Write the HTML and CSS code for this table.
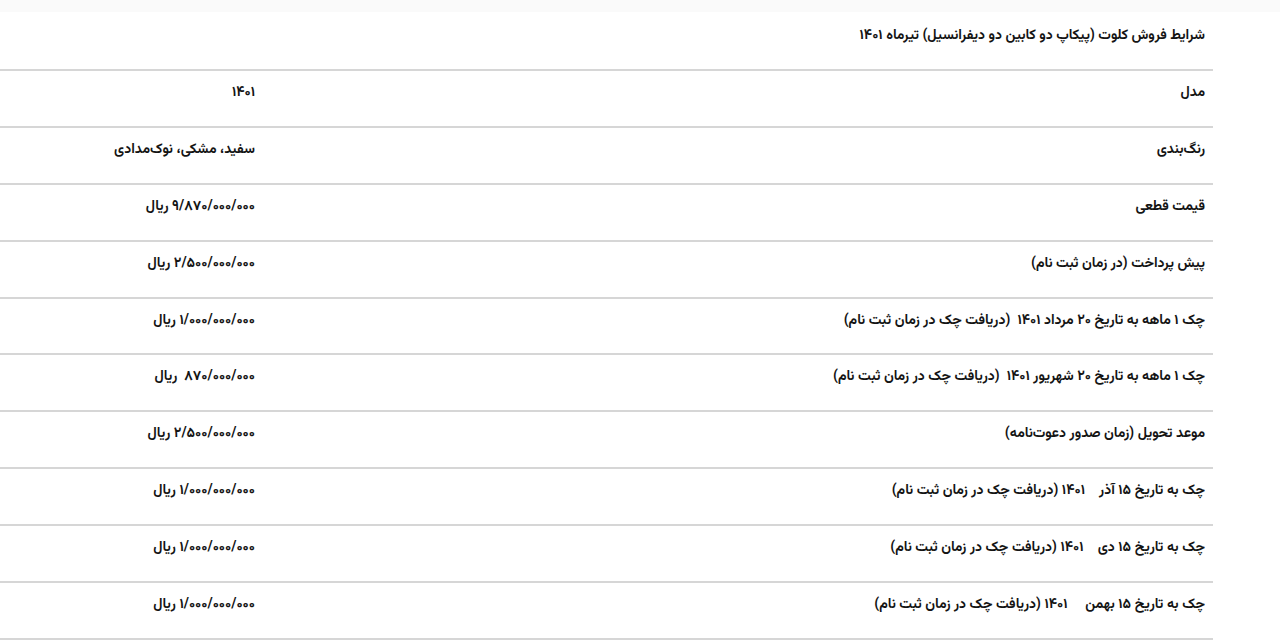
FILE: index.html
```html
<!DOCTYPE html>
<html lang="fa" dir="rtl">
<head>
<meta charset="utf-8">
<title>شرایط فروش کلوت</title>
<link rel="stylesheet" href="styles.css">
</head>
<body>
<div class="topband"></div>
<div class="sheet">
  <h2 class="title">شرایط فروش کلوت (پیکاپ دو کابین دو دیفرانسیل) تیرماه ۱۴۰۱</h2>
  <table class="terms">
    <tbody>
      <tr><td class="label">مدل</td><td class="value">۱۴۰۱</td></tr>
      <tr><td class="label">رنگ‌بندی</td><td class="value">سفید، مشکی، نوک‌مدادی</td></tr>
      <tr><td class="label">قیمت قطعی</td><td class="value">۹/۸۷۰/۰۰۰/۰۰۰ ریال</td></tr>
      <tr><td class="label">پیش پرداخت (در زمان ثبت نام)</td><td class="value">۲/۵۰۰/۰۰۰/۰۰۰ ریال</td></tr>
      <tr><td class="label">چک ۱ ماهه به تاریخ ۲۰ مرداد ۱۴۰۱  (دریافت چک در زمان ثبت نام)</td><td class="value">۱/۰۰۰/۰۰۰/۰۰۰ ریال</td></tr>
      <tr><td class="label">چک ۱ ماهه به تاریخ ۲۰ شهریور ۱۴۰۱  (دریافت چک در زمان ثبت نام)</td><td class="value">۸۷۰/۰۰۰/۰۰۰  ریال</td></tr>
      <tr><td class="label">موعد تحویل (زمان صدور دعوت‌نامه)</td><td class="value">۲/۵۰۰/۰۰۰/۰۰۰ ریال</td></tr>
      <tr><td class="label">چک به تاریخ ۱۵ آذر    ۱۴۰۱ (دریافت چک در زمان ثبت نام)</td><td class="value">۱/۰۰۰/۰۰۰/۰۰۰ ریال</td></tr>
      <tr><td class="label">چک به تاریخ ۱۵ دی    ۱۴۰۱ (دریافت چک در زمان ثبت نام)</td><td class="value">۱/۰۰۰/۰۰۰/۰۰۰ ریال</td></tr>
      <tr><td class="label">چک به تاریخ ۱۵ بهمن     ۱۴۰۱ (دریافت چک در زمان ثبت نام)</td><td class="value">۱/۰۰۰/۰۰۰/۰۰۰ ریال</td></tr>
    </tbody>
  </table>
</div>
</body>
</html>
```
FILE: styles.css
```css
html, body {
  margin: 0;
  padding: 0;
  background: #ffffff;
}
body {
  font-family: "Vazirmatn", "DejaVu Sans", sans-serif;
  color: #141414;
  font-size: 14px;
  font-weight: bold;
  overflow: hidden;
}
.topband {
  height: 12px;
  background: #fafafa;
}
.sheet {
  width: 1213px;
  margin-left: auto;
  margin-right: 67px;
}
.title {
  margin: 0;
  padding: 15px 8px 0 8px;
  height: 42px;
  font-size: 14px;
  line-height: 18px;
  font-weight: bold;
  text-align: right;
  border-bottom: 2px solid #d6d6d6;
}
.terms {
  width: 100%;
  border-collapse: collapse;
}
.terms td {
  border-bottom: 2px solid #d6d6d6;
  padding: 13px 8px 23.9px 8px;
  line-height: 18px;
  height: 18px;
  text-align: right;
  vertical-align: top;
  white-space: pre;
}
.terms td.label {
  width: 934px;
}
```
